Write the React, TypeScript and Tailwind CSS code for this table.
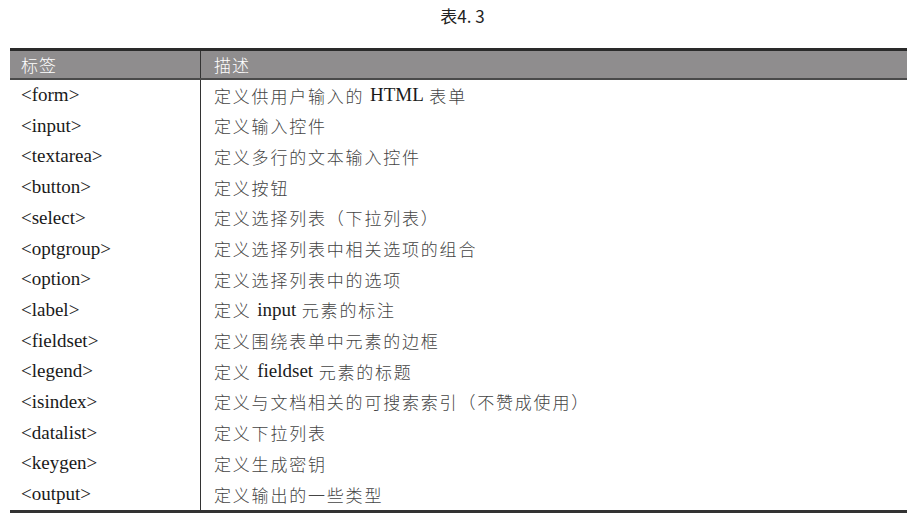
import React from "react";

const rows: [string, React.ReactNode][] = [
  ["<form>", <>定义供用户输入的 <span className="font-serif-x">HTML</span> 表单</>],
  ["<input>", "定义输入控件"],
  ["<textarea>", "定义多行的文本输入控件"],
  ["<button>", "定义按钮"],
  ["<select>", "定义选择列表（下拉列表）"],
  ["<optgroup>", "定义选择列表中相关选项的组合"],
  ["<option>", "定义选择列表中的选项"],
  ["<label>", <>定义 <span className="font-serif-x">input</span> 元素的标注</>],
  ["<fieldset>", "定义围绕表单中元素的边框"],
  ["<legend>", <>定义 <span className="font-serif-x">fieldset</span> 元素的标题</>],
  ["<isindex>", "定义与文档相关的可搜索索引（不赞成使用）"],
  ["<datalist>", "定义下拉列表"],
  ["<keygen>", "定义生成密钥"],
  ["<output>", "定义输出的一些类型"],
];

const serif = "font-['Liberation_Serif',serif]";
const cjk = "font-['Noto_Sans_CJK_SC',sans-serif]";

export default function App() {
  return (
    <div className="w-[923px] h-[519px] bg-white relative overflow-hidden">
      <div className={`h-[48px] pt-[6px] text-center text-[17px] leading-[20px] text-[#222] pl-[2px] ${cjk}`}>
        表4. 3
      </div>
      <div className="ml-[10px] w-[897px] border-t-[3px] border-b-[3px] border-t-[#2a2a2a] border-b-[#333]">
        <div className="flex h-[29px] bg-[#8f8d8e] text-white border-b-2 border-[#4a4a4a]">
          <div className={`w-[191px] border-r border-[#333] pl-[11px] flex items-center text-[17px] tracking-[1px] font-light ${cjk}`}>
            标签
          </div>
          <div className={`flex-1 pl-[13px] flex items-center text-[17px] tracking-[1px] font-light ${cjk}`}>
            描述
          </div>
        </div>
        {rows.map(([tag, desc], i) => (
          <div key={i} className="flex h-[30.7px]">
            <div className={`w-[191px] border-r border-[#333] pl-[11px] flex items-center text-[19px] text-[#1a1a1a] ${serif}`}>
              {tag}
            </div>
            <div className={`flex-1 pl-[13px] flex items-center text-[17px] tracking-[1.8px] font-light text-[#444] whitespace-pre ${cjk} [&_.font-serif-x]:font-['Liberation_Serif',serif] [&_.font-serif-x]:font-normal [&_.font-serif-x]:text-[19px] [&_.font-serif-x]:tracking-normal [&_.font-serif-x]:text-[#1a1a1a]`}>
              {desc}
            </div>
          </div>
        ))}
      </div>
    </div>
  );
}
